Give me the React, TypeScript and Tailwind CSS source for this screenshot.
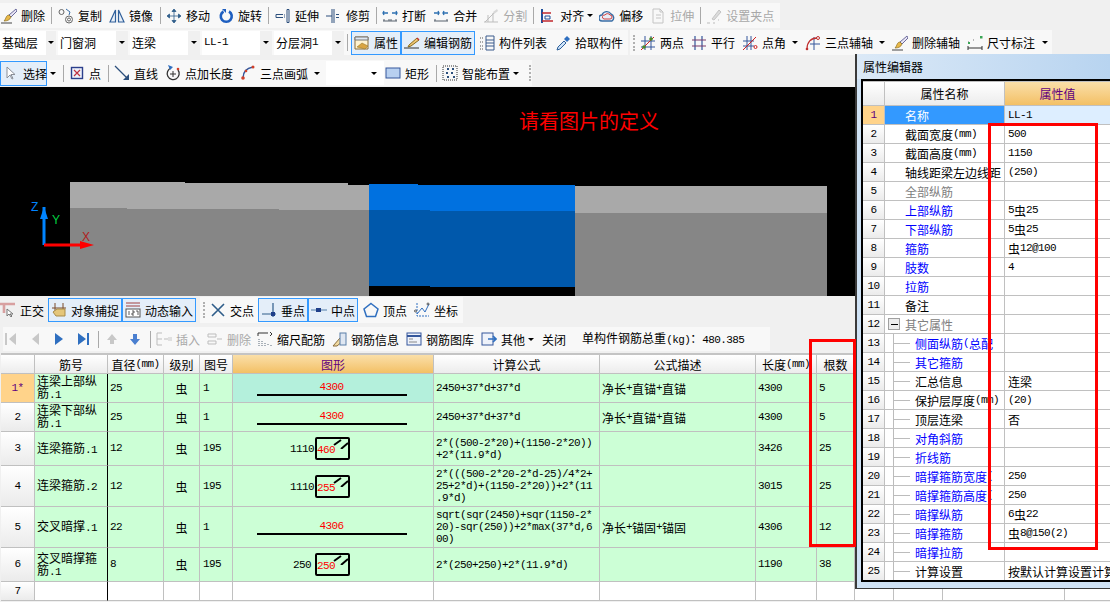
import React from "react";

const Ic = ({ children }: { children: React.ReactNode }) => (
  <svg viewBox="0 0 16 16" className="w-4 h-4 shrink-0" fill="none">
    {children}
  </svg>
);

const icons: Record<string, React.ReactNode> = {
  brush: (
    <>
      <path d="M15 1 8 7l2 2 6-6z" fill="#e8e4f4" stroke="#6b6b9c" />
      <path d="M8 7c-3 0-3 4-5 6 3 0 6-1 7-4z" fill="#e9b949" stroke="#8a6d1f" strokeWidth=".7" />
      <path d="M0 15h11" stroke="#444" />
    </>
  ),
  copy: (
    <>
      <circle cx="3.500" cy="4" r="2.500" stroke="#666" />
      <circle cx="11" cy="11.500" r="3.500" stroke="#666" />
      <circle cx="11" cy="11.500" r="1.500" stroke="#666" />
      <path d="M8 1l4 3-1 3" stroke="#3a6ea5" />
    </>
  ),
  mirror: <path d="M1 14 6.500 2v12zM15 14 9.500 2v12z" stroke="#2f5f9a" strokeWidth="1.200" fill="#eaf0f8" />,
  move: (
    <path
      d="M8 3v10M3 8h10M8 1 6 3.500h4zM8 15l-2-2.500h4zM1 8l2.500-2v4zM15 8l-2.500-2v4z"
      stroke="#2f5d8a"
      fill="#2f5d8a"
      strokeWidth=".8"
    />
  ),
  rotate: (
    <>
      <path d="M5.500 3.500a5.500 5.500 0 1 0 5.500 0" stroke="#1f5fc0" strokeWidth="2.600" />
      <path d="M4 1h4v4z" fill="#1f5fc0" />
    </>
  ),
  extend: <path d="M1 6.500h7M1 9.500h7M1 6.500v3M9 7h1M9 9h1M12 1.500v13h2v-13z" stroke="#2c4f7c" />,
  trim: <path d="M6 1v14M8 1v14M0 8h6M10 6.500h3M10 9.500h3" stroke="#2c4f7c" />,
  breakLine: (
    <>
      <path d="M1 5h5M10 5h5M2 3 1 5l1 2M14 3l1 2-1 2" stroke="#2c6fb0" strokeWidth="1.300" />
      <path d="M1 13h14M2 11v2M7 11v2M9 11v2M14 11v2" stroke="#56606c" />
    </>
  ),
  merge: (
    <>
      <path d="M1 5h5M10 5h5M5 3l1 2-1 2M11 3l-1 2 1 2" stroke="#2c6fb0" strokeWidth="1.300" />
      <path d="M1 13h14M2 11v2M14 11v2" stroke="#56606c" />
    </>
  ),
  split: (
    <>
      <path d="M1 14h14M2 14 13 3M5 14V7M10 14V5" stroke="#bdbdbd" />
      <path d="M10 4l4-3 1 2-4 3z" fill="#d8d8d8" />
    </>
  ),
  align: (
    <>
      <path d="M2 1v14" stroke="#1f4f9a" strokeWidth="2" />
      <path d="M2 5h9M2 13h11" stroke="#c0272d" strokeWidth="1.600" />
      <path d="M5 8h5v3H5z" stroke="#1f4f9a" />
    </>
  ),
  offset: (
    <>
      <path d="M3 13a3 3 0 0 1 0-6 5 5 0 0 1 9-1 4 4 0 0 1 1 7z" stroke="#3a6ea5" strokeWidth="1.400" fill="#e8eef8" />
      <path d="M5 11a2 2 0 0 1 1-4 3 3 0 0 1 5 0 2 2 0 0 1 0 4z" stroke="#d04040" />
    </>
  ),
  stretch: <path d="M3 1h7l3 3v11H3zM10 1v3h3M6 7h5M6 10h5" stroke="#c4c4c4" />,
  grip: (
    <>
      <path d="M1 15h3M7 15h2M12 12h1" stroke="#bbb" />
      <path d="M6 11 13 2l2 2-7 8z" fill="#dcdcdc" stroke="#c4c4c4" />
    </>
  ),
  attr: (
    <>
      <path d="M1 2h13v12H1z" fill="#fff3d0" stroke="#8a6d3b" />
      <path d="M1 2h13v3H1z" fill="#dfe7f2" stroke="#777" />
      <path d="M3 12l5-4 6 3-3 3z" fill="#d9a441" stroke="#8a6d1f" strokeWidth=".5" />
    </>
  ),
  edit: (
    <>
      <path d="M0 13h15" stroke="#333" />
      <path d="M5 10 13 3l2 2-8 6-3 1z" fill="#f0c674" stroke="#8a6d1f" />
      <path d="M13 3l2 2" stroke="#c03030" strokeWidth="1.400" />
    </>
  ),
  list: (
    <>
      <path d="M1 3h3M1 7h3M1 11h3M1 14h3" stroke="#555" strokeDasharray="1 1" />
      <path d="M7 1h8v14H7zM7 5h8M7 8h8M7 11h8" stroke="#3a5a8c" />
    </>
  ),
  pick: (
    <>
      <path d="M2 15l1-3 6-6 2 2-6 6z" fill="#cfe3f8" stroke="#2c5f9a" />
      <path d="M9 4l3-3 3 3-3 3z" fill="#2f6fc0" />
    </>
  ),
  parallel: (
    <>
      <path d="M4 1v14M11 1v14" stroke="#34569b" strokeWidth="1.200" />
      <path d="M1 5h14M1 11h14" stroke="#7a3a6a" strokeWidth="1.200" />
    </>
  ),
  angle: (
    <>
      <path d="M1 6h11M1 11h11M5 1v14M9 1v14" stroke="#34569b" />
      <path d="M1 15 14 2" stroke="#d02020" />
      <circle cx="13.500" cy="12" r="1.500" stroke="#d02020" />
    </>
  ),
  arcAxis: (
    <>
      <path d="M5 9h10M9 2v13" stroke="#34569b" />
      <path d="M2 14C2 7 6 3 12 3" stroke="#c03030" strokeWidth="1.300" />
      <circle cx="2" cy="14" r="1.300" fill="#c03030" />
      <circle cx="13" cy="3" r="1.500" stroke="#c03030" />
    </>
  ),
  dimension: (
    <>
      <path d="M1 11v4M15 11v4M1 13h14" stroke="#333" />
      <path d="M1 7h2M6 5h2" stroke="#777" strokeDasharray="1 1" />
      <rect x="13" y="1" width="2.500" height="2.500" fill="#3aa655" />
      <rect x="1" y="7" width="2" height="2" fill="#3aa655" />
    </>
  ),
  twoPointDots: (
    <>
      <path d="M1 6h14M1 12h14M5 1v14M11 1v14" stroke="#34569b" />
      <path d="M1 15 14 2" stroke="#d02020" />
      <circle cx="11" cy="4" r="1.800" fill="#4a8a2a" />
      <circle cx="4" cy="12" r="1.800" fill="#4a8a2a" />
    </>
  ),
  cursor: <path d="M4 2v11l3-3 2 4 1-.5-2-4h4z" fill="#fff" stroke="#8a8f98" />,
  point: (
    <>
      <rect x="2.500" y="2.500" width="11" height="11" stroke="#2c3f8c" strokeWidth="1.400" fill="#eef2fa" />
      <path d="M5 5l6 6M11 5l-6 6" stroke="#c03040" strokeWidth="1.200" />
    </>
  ),
  line: (
    <>
      <path d="M1 1 14 14" stroke="#2c4f7c" strokeWidth="1.300" />
      <path d="M15 15V9l-6 6z" fill="#2c4f7c" />
    </>
  ),
  pointLen: (
    <>
      <path d="M6 3a6 6 0 1 0 7 2" stroke="#333" strokeWidth="1.300" />
      <path d="M3 0l5 2-3 3z" fill="#2f6fc0" />
      <path d="M8 6v6M5 9h6" stroke="#333" />
      <circle cx="13" cy="4" r="1.300" fill="#d0402a" />
    </>
  ),
  arc: (
    <>
      <path d="M3 13C3 7 7 3 13 2" stroke="#34569b" strokeWidth="1.400" />
      <circle cx="3" cy="13" r="1.800" fill="#d0402a" />
      <circle cx="6" cy="6" r="1.300" fill="#d0402a" />
      <circle cx="13" cy="2" r="1.500" fill="#d0402a" />
    </>
  ),
  rect: <rect x="1" y="3" width="14" height="10" fill="#b8d0f0" stroke="#34569b" />,
  smart: (
    <>
      <rect x="1" y="1" width="14" height="14" stroke="#333" strokeDasharray="1 1" />
      <path d="M5 4h2M10 4h2M4 8h2M9 8h2M5 12h2M11 12h2" stroke="#2c4f7c" strokeWidth="1.800" />
    </>
  ),
  ortho: (
    <>
      <path d="M0 2h15M4 2v9" stroke="#d8a0a0" strokeWidth="2.600" />
      <path d="M7 7v7l2-2 2 3 1-1-2-2h3z" fill="#fff" stroke="#777" />
    </>
  ),
  snap: (
    <>
      <path d="M4 1v8M12 1v8M1 6h14" stroke="#7a4a2a" />
      <path d="M2 10l4-3h8v7H5z" fill="#e4c67a" stroke="#a88b4a" />
    </>
  ),
  dyn: (
    <>
      <path d="M1 1h14M1 4h14" stroke="#a04040" />
      <rect x="1" y="7" width="14" height="8" fill="#fff" stroke="#555" />
      <path d="M4 9v4M7 9h2v2H7v2h2M11 9h2v4" stroke="#333" strokeWidth=".8" />
    </>
  ),
  cross: <path d="M2 2 14 14M14 2 2 14" stroke="#2f5d8a" strokeWidth="1.600" />,
  perp: (
    <>
      <path d="M1 12h14M12 1v14" stroke="#2f5d8a" strokeWidth="1.200" />
      <rect x="10" y="10" width="4" height="4" fill="#1f3f8a" />
    </>
  ),
  mid: (
    <>
      <path d="M0 8h16" stroke="#7a9cc0" strokeWidth="1.400" />
      <rect x="5" y="6" width="5" height="4" fill="#1f3f8a" />
    </>
  ),
  vertex: <path d="M8 1.500 15 7l-2.500 7.500h-9L1 7z" stroke="#2f6fc0" strokeWidth="1.500" />,
  coord: (
    <>
      <path d="M3 1v13h12" stroke="#2f6fc0" strokeDasharray="2 1" />
      <path d="M3 12 8 6l3 4 4-8" stroke="#2f6fc0" />
      <circle cx="1.500" cy="9" r="1" stroke="#555" />
      <circle cx="14" cy="2" r="1" stroke="#555" />
    </>
  ),
  first: <path d="M2 2h2v12H2zM13 2v12L6 8z" fill="#c8c8c8" />,
  prev: <path d="M12 2v12L5 8z" fill="#c8c8c8" />,
  next: <path d="M4 2v12l8-6z" fill="#2f6fc0" />,
  last: <path d="M3 2v12l8-6zM12 2h2v12h-2z" fill="#2f6fc0" />,
  up: <path d="M8 3l5 6h-3v4H6V9H3z" fill="#c8c8c8" />,
  down: <path d="M6 3h4v5h3l-5 6-5-6h3z" fill="#4a7fd0" />,
  insert: (
    <>
      <path d="M1 2h5M1 8h5M1 14h5M1 2v12" stroke="#bdbdbd" />
      <path d="M8 8h4" stroke="#bdbdbd" />
      <rect x="12" y="6" width="4" height="4" fill="#e0e0e0" />
    </>
  ),
  remove: (
    <>
      <path d="M1 3h8v3H1zM1 10h8v3H1z" stroke="#bdbdbd" />
      <path d="M10 8h5" stroke="#bdbdbd" />
    </>
  ),
  scale: (
    <>
      <path d="M1 2h10M1 2v3" stroke="#333" />
      <path d="M13 1l2 2-2 2" stroke="#333" />
      <path d="M2 8v7M5 10v5M8 12v3M11 13v2M14 14v1" stroke="#5a6a7a" strokeDasharray="1 1" />
    </>
  ),
  info: (
    <>
      <path d="M2 15 9 7l3 3-6 5z" fill="#f0d9a0" stroke="#8a6d3b" />
      <rect x="9" y="2" width="6" height="12" fill="#dfe7f2" stroke="#5a7fa8" />
    </>
  ),
  library: (
    <>
      <rect x="1" y="2" width="14" height="12" fill="#eef2fa" stroke="#34569b" />
      <path d="M1 5h14" stroke="#34569b" strokeWidth="2" />
      <path d="M3 8h4M3 11h8" stroke="#888" />
    </>
  ),
  other: (
    <>
      <rect x="1" y="2" width="11" height="12" fill="#eef2fa" stroke="#34569b" />
      <path d="M7 8h8M12 5l3 3-3 3" stroke="#2f6fc0" strokeWidth="1.600" />
    </>
  ),
};

const mono = "font-['Liberation_Mono',monospace] text-[11px] tracking-[-0.6px]";

const T = ({ s }: { s: string }) => (
  <>
    {s.split(/([\x20-\x7e]+)/).map((part, i) =>
      /[\x20-\x7e]/.test(part) ? (
        <span key={i} className={mono}>
          {part}
        </span>
      ) : (
        part
      )
    )}
  </>
);

const Tool = ({
  icon,
  label,
  cn = "",
  muted = false,
  active = false,
}: {
  icon: string;
  label: string;
  cn?: string;
  muted?: boolean;
  active?: boolean;
}) => (
  <div
    className={`flex items-center gap-[4px] shrink-0 whitespace-nowrap ${cn} ${
      muted ? "text-[#a8a8a8]" : ""
    } ${active ? "h-[24px] px-[2px] border border-[#3399ff] bg-[#e4eef9]" : ""}`}
  >
    <Ic>{icons[icon]}</Ic>
    <span>{label}</span>
  </div>
);

const Sep = ({ cn = "" }: { cn?: string }) => (
  <div className={`w-px h-[17px] bg-[#a9a9a9] shrink-0 ${cn}`} />
);

const Arrow = ({ cn = "" }: { cn?: string }) => (
  <div className={`w-0 h-0 border-x-[3px] border-x-transparent border-t-[3px] border-t-black shrink-0 ${cn}`} />
);

const Grip = ({ cn = "" }: { cn?: string }) => (
  <div className={`w-[2px] h-[16px] shrink-0 border-l-2 border-dotted border-[#b0b0b0] ${cn}`} />
);

const Combo = ({ label, cn = "" }: { label: string; cn?: string }) => (
  <div className={`flex h-[24px] shrink-0 bg-white ${cn}`}>
    <div className="w-[58px] pl-[2px] flex items-center whitespace-nowrap">
      <T s={label} />
    </div>
    <div className="w-[12px] bg-[#f0f0f0] flex items-center justify-center">
      <Arrow />
    </div>
  </div>
);

const Gang = () => <span>虫</span>;

const Bar = ({ value }: { value: string }) => (
  <div className="h-full flex flex-col items-center justify-center pr-[3px]">
    <span className={`text-[#ff0000] leading-[12px] ${mono}`}>{value}</span>
    <div className="w-[150px] h-[2px] bg-black mt-[1px]" />
  </div>
);

const Stirrup = ({ side, red }: { side: string; red: string }) => (
  <div className="flex items-center h-full pl-[56px]">
    <span className={`w-[26px] mt-[2px] text-center ${mono}`}>{side}</span>
    <div className="relative w-[35px] h-[23px] border-2 border-black rounded-[2px] flex items-end">
      <span className={`text-[#ff0000] leading-[15px] ${mono}`}>{red}</span>
      <svg viewBox="0 0 15 10" className="absolute right-0 top-0 w-[15px] h-[10px]" fill="none">
        <path d="M1 6 8 1M8 10 15 4" stroke="#000" strokeWidth="2" />
      </svg>
    </div>
  </div>
);

const cols = "grid grid-cols-[34px_73px_56px_36px_33px_201px_166px_156px_61px_38px_39px_49px_122px_60px]";

const rows = [
  { h: "h-[29px]", n: "1*", name: "连梁上部纵筋.1", d: "25", no: "1", shape: <Bar value="4300" />, f: "2450+37*d+37*d", desc: "净长+直锚+直锚", len: "4300", cnt: "5" },
  { h: "h-[29px]", n: "2", name: "连梁下部纵筋.1", d: "25", no: "1", shape: <Bar value="4300" />, f: "2450+37*d+37*d", desc: "净长+直锚+直锚", len: "4300", cnt: "5" },
  { h: "h-[34px]", n: "3", name: "连梁箍筋.1", d: "12", no: "195", shape: <Stirrup side="1110" red="460" />, f: "2*((500-2*20)+(1150-2*20))\n+2*(11.9*d)", desc: "", len: "3426", cnt: "25" },
  { h: "h-[41px]", n: "4", name: "连梁箍筋.2", d: "12", no: "195", shape: <Stirrup side="1110" red="255" />, f: "2*(((500-2*20-2*d-25)/4*2+\n25+2*d)+(1150-2*20))+2*(11\n.9*d)", desc: "", len: "3015", cnt: "25" },
  { h: "h-[41px]", n: "5", name: "交叉暗撑.1", d: "22", no: "1", shape: <Bar value="4306" />, f: "sqrt(sqr(2450)+sqr(1150-2*\n20)-sqr(250))+2*max(37*d,6\n00)", desc: "净长+锚固+锚固", len: "4306", cnt: "12" },
  { h: "h-[34px]", n: "6", name: "交叉暗撑箍筋.1", d: "8", no: "195", shape: <Stirrup side="250" red="250" />, f: "2*(250+250)+2*(11.9*d)", desc: "", len: "1190", cnt: "38" },
];

const cell = "border-r border-b border-[#c0c0c0] flex items-center overflow-hidden";
const head =
  "border-r border-b border-[#c0c0c0] flex items-center justify-center bg-gradient-to-b from-white to-[#ececec] h-[19px]";
const num = "border-r border-b border-[#c0c0c0] flex items-center justify-center";
const numBg = "bg-gradient-to-b from-white to-[#ebebeb]";

type Prop = { n: number; name: string; value?: string; tone?: "blue" | "gray"; sub?: boolean };

const props: Prop[] = [
  { n: 1, name: "名称", value: "LL-1" },
  { n: 2, name: "截面宽度(mm)", value: "500" },
  { n: 3, name: "截面高度(mm)", value: "1150" },
  { n: 4, name: "轴线距梁左边线距", value: "(250)" },
  { n: 5, name: "全部纵筋", tone: "gray" },
  { n: 6, name: "上部纵筋", value: "5虫25", tone: "blue" },
  { n: 7, name: "下部纵筋", value: "5虫25", tone: "blue" },
  { n: 8, name: "箍筋", value: "虫12@100", tone: "blue" },
  { n: 9, name: "肢数", value: "4", tone: "blue" },
  { n: 10, name: "拉筋", tone: "blue" },
  { n: 11, name: "备注" },
  { n: 12, name: "其它属性", tone: "gray" },
  { n: 13, name: "侧面纵筋(总配", tone: "blue", sub: true },
  { n: 14, name: "其它箍筋", tone: "blue", sub: true },
  { n: 15, name: "汇总信息", value: "连梁", sub: true },
  { n: 16, name: "保护层厚度(mm)", value: "(20)", sub: true },
  { n: 17, name: "顶层连梁", value: "否", sub: true },
  { n: 18, name: "对角斜筋", tone: "blue", sub: true },
  { n: 19, name: "折线筋", tone: "blue", sub: true },
  { n: 20, name: "暗撑箍筋宽度(", value: "250", tone: "blue", sub: true },
  { n: 21, name: "暗撑箍筋高度(", value: "250", tone: "blue", sub: true },
  { n: 22, name: "暗撑纵筋", value: "6虫22", tone: "blue", sub: true },
  { n: 23, name: "暗撑箍筋", value: "虫8@150(2)", tone: "blue", sub: true },
  { n: 24, name: "暗撑拉筋", tone: "blue", sub: true },
  { n: 25, name: "计算设置", value: "按默认计算设置计算", sub: true },
];

const PropertyWindow = () => (
  <div className="absolute left-[855px] top-[54px] w-[255px] h-[535px] bg-[#cfe2f5] border-l-2 border-b border-[#3a3a3a] overflow-hidden">
    <div className="h-[25px] pl-[6px] flex items-center bg-gradient-to-r from-[#dbe9f7] to-[#b8d4f0]">属性编辑器</div>
    <div className="ml-[4px] h-[503px] border-2 border-double border-black border-r-0 bg-white overflow-hidden">
      <div className="flex h-[25px] border-y border-[#c0c0c0]">
        <div className="w-[22px] border-r border-[#c0c0c0] bg-gradient-to-b from-white to-[#ebebeb]" />
        <div className="w-[120px] border-r border-[#c0c0c0] flex items-center justify-center bg-gradient-to-b from-white to-[#ececec]">
          属性名称
        </div>
        <div className="flex-1 flex items-center justify-center text-[#60007f] bg-gradient-to-b from-[#fadfa8] to-[#f3c064]">
          属性值
        </div>
      </div>
      {props.map((p) => (
        <div key={p.n} className="flex h-[19px] border-b border-[#c0c0c0]">
          <div
            className={`w-[22px] border-r border-[#c0c0c0] flex items-center justify-center ${mono} ${
              p.n === 1 ? "bg-[#ffd38a] text-[#60007f]" : numBg
            }`}
          >
            {p.n}
          </div>
          <div
            className={`relative w-[120px] border-r border-[#c0c0c0] flex items-center whitespace-nowrap overflow-hidden ${
              p.sub ? "pl-[30px]" : "pl-[20px]"
            } ${p.n === 1 ? "bg-[#3399ff] text-white" : ""} ${
              p.tone === "blue" ? "text-[#0000ff]" : ""
            } ${p.tone === "gray" ? "text-[#808080]" : ""}`}
          >
            {p.sub && (
              <>
                <div className="absolute left-[8px] top-0 h-full w-px bg-[#bcbcbc]" />
                <div className="absolute left-[9px] top-[9px] h-px w-[16px] bg-[#bcbcbc]" />
              </>
            )}
            {p.n === 12 && (
              <div className="absolute left-[3px] top-[3px] w-[12px] h-[12px] border border-[#a0a0a0] bg-[#ececec] flex items-center justify-center">
                <div className="w-[7px] h-px bg-black" />
              </div>
            )}
            <T s={p.name} />
          </div>
          <div
            className={`flex-1 pl-[3px] flex items-center whitespace-pre overflow-hidden ${
              p.n === 1 ? "bg-[#ddeeff]" : ""
            }`}
          >
            {p.value ? <T s={p.value} /> : null}
          </div>
        </div>
      ))}
    </div>
  </div>
);

export default function App() {
  return (
    <div className="relative w-[1110px] h-[602px] overflow-hidden bg-[#f0f0f0] text-black text-[12px] leading-[13px] font-['Noto_Sans_CJK_SC',sans-serif]">
      <div className="h-[30px] pt-[3px]">
        <div className="flex items-center w-[780px] h-[25px] bg-[#f8f8f8]">
          <Tool icon="brush" label="删除" cn="ml-[1px]" />
          <Sep cn="ml-[6px]" />
          <Tool icon="copy" label="复制" cn="ml-[6px]" />
          <Tool icon="mirror" label="镜像" cn="ml-[7px]" />
          <Sep cn="ml-[7px]" />
          <Tool icon="move" label="移动" cn="ml-[5px]" />
          <Tool icon="rotate" label="旋转" cn="ml-[8px]" />
          <Sep cn="ml-[6px]" />
          <Tool icon="extend" label="延伸" cn="ml-[6px]" />
          <Tool icon="trim" label="修剪" cn="ml-[7px]" />
          <Sep cn="ml-[6px]" />
          <Tool icon="breakLine" label="打断" cn="ml-[5px]" />
          <Tool icon="merge" label="合并" cn="ml-[7px]" />
          <Tool icon="split" label="分割" cn="ml-[6px]" muted />
          <Sep cn="ml-[6px]" />
          <Tool icon="align" label="对齐" cn="ml-[6px]" />
          <Arrow cn="ml-[3px]" />
          <Tool icon="offset" label="偏移" cn="ml-[6px]" />
          <Tool icon="stretch" label="拉伸" cn="ml-[7px]" muted />
          <Sep cn="ml-[6px]" />
          <Tool icon="grip" label="设置夹点" cn="ml-[5px]" muted />
        </div>
      </div>

      <div className="h-[27px] flex">
        <div className="flex items-center w-[628px] h-[25px] bg-[#f8f8f8]">
          <Combo label="基础层" cn="w-[56px] overflow-hidden" />
          <Combo label="门窗洞" cn="ml-[2px]" />
          <Combo label="连梁" cn="ml-[2px]" />
          <Combo label="LL-1" cn="ml-[2px]" />
          <Combo label="分层洞1" cn="ml-[2px]" />
          <Sep cn="ml-[3px]" />
          <Tool icon="attr" label="属性" cn="ml-[3px]" active />
          <Tool icon="edit" label="编辑钢筋" active />
          <Tool icon="list" label="构件列表" cn="ml-[4px]" />
          <Tool icon="pick" label="拾取构件" cn="ml-[8px]" />
        </div>
        <div className="flex items-center ml-[2px] w-[422px] h-[25px] bg-[#f8f8f8]">
          <Grip cn="ml-[3px]" />
          <Tool icon="twoPointDots" label="两点" cn="ml-[5px]" />
          <Tool icon="parallel" label="平行" cn="ml-[7px]" />
          <Tool icon="angle" label="点角" cn="ml-[7px]" />
          <Arrow cn="ml-[6px]" />
          <Tool icon="arcAxis" label="三点辅轴" cn="ml-[7px]" />
          <Arrow cn="ml-[6px]" />
          <Tool icon="brush" label="删除辅轴" cn="ml-[7px]" />
          <Tool icon="dimension" label="尺寸标注" cn="ml-[7px]" />
          <Arrow cn="ml-[7px]" />
        </div>
      </div>

      <div className="h-[30px] pt-[3px]">
        <div className="flex items-center w-[532px] h-[26px] bg-[#f8f8f8]">
          <Tool icon="cursor" label="选择" cn="w-[47px] !h-[25px]" active />
          <Arrow cn="ml-[3px]" />
          <Sep cn="ml-[7px]" />
          <Tool icon="point" label="点" cn="ml-[5px]" />
          <Sep cn="ml-[7px]" />
          <Tool icon="line" label="直线" cn="ml-[5px]" />
          <Tool icon="pointLen" label="点加长度" cn="ml-[7px]" />
          <Tool icon="arc" label="三点画弧" cn="ml-[7px]" />
          <Arrow cn="ml-[6px]" />
          <div className="ml-[6px] w-[58px] h-[24px] bg-white flex items-center justify-end pr-[7px]">
            <Arrow />
          </div>
          <Tool icon="rect" label="矩形" cn="ml-[1px]" />
          <Sep cn="ml-[7px]" />
          <Tool icon="smart" label="智能布置" cn="ml-[5px]" />
          <Arrow cn="ml-[3px]" />
          <Grip cn="ml-[10px]" />
        </div>
      </div>

      <div className="relative h-[209px] bg-black">
        <svg viewBox="0 0 1110 209" className="w-full h-full block">
          <path d="M70 95h115v1h163v2h21v26H70z" fill="#a9a9a9" />
          <path d="M70 121h57v1h152v1h90v86H70z" fill="#868686" />
          <path d="M369 97h49v1h157v26H369z" fill="#0071e0" />
          <path d="M369 123h61v1h145v76h-145v-1H369z" fill="#0058ab" />
          <path d="M575 99h252v28H575z" fill="#a9a9a9" />
          <path d="M575 126h252v83H575z" fill="#868686" />
          <path d="M44 158v-38" stroke="#0084ff" strokeWidth="3" />
          <path d="M44 120l-4 12h8z" fill="#0084ff" />
          <path d="M44 158h38" stroke="#ff0000" strokeWidth="3" />
          <path d="M94 158l-14-4v8z" fill="#ff0000" />
          <text x="31" y="124" fontSize="12" fill="#0084ff" fontFamily="Liberation Sans, sans-serif">Z</text>
          <text x="52" y="137" fontSize="12" fill="#00d040" fontFamily="Liberation Sans, sans-serif">Y</text>
          <text x="82" y="154" fontSize="12" fill="#b02020" fontFamily="Liberation Sans, sans-serif">X</text>
        </svg>
        <div className="absolute left-[519px] top-[22px] text-[20px] leading-[24px] text-[#ff0000]">请看图片的定义</div>
      </div>

      <div className="h-[30px] pt-[2px]">
        <div className="h-[24px] flex items-center">
          <Tool icon="ortho" label="正交" />
          <Tool icon="snap" label="对象捕捉" cn="ml-[4px]" active />
          <Tool icon="dyn" label="动态输入" active />
          <div className="flex items-center ml-[4px] h-[26px] w-[263px] bg-[#f8f8f8]">
            <Grip cn="ml-[3px]" />
            <Tool icon="cross" label="交点" cn="ml-[5px]" />
            <Tool icon="perp" label="垂点" cn="ml-[4px]" active />
            <Tool icon="mid" label="中点" active />
            <Tool icon="vertex" label="顶点" cn="ml-[5px]" />
            <Tool icon="coord" label="坐标" cn="ml-[7px]" />
          </div>
        </div>
      </div>

      <div className="h-[27px] pt-[1px]">
        <div className="flex items-center ml-[3px] w-[767px] h-[24px] bg-[#f8f8f8]">
          <Ic>{icons.first}</Ic>
          <div className="ml-[8px]"><Ic>{icons.prev}</Ic></div>
          <div className="ml-[8px]"><Ic>{icons.next}</Ic></div>
          <div className="ml-[8px]"><Ic>{icons.last}</Ic></div>
          <Sep cn="ml-[7px]" />
          <div className="ml-[5px]"><Ic>{icons.up}</Ic></div>
          <div className="ml-[7px]"><Ic>{icons.down}</Ic></div>
          <Sep cn="ml-[7px]" />
          <Tool icon="insert" label="插入" cn="ml-[5px]" muted />
          <Tool icon="remove" label="删除" cn="ml-[7px]" muted />
          <Tool icon="scale" label="缩尺配筋" cn="ml-[6px]" />
          <Tool icon="info" label="钢筋信息" cn="ml-[6px]" />
          <Tool icon="library" label="钢筋图库" cn="ml-[7px]" />
          <Tool icon="other" label="其他" cn="ml-[7px]" />
          <Arrow cn="ml-[3px]" />
          <span className="ml-[8px]">关闭</span>
          <span className="ml-[16px] whitespace-nowrap">
            <T s="单构件钢筋总重(kg)：480.385" />
          </span>
        </div>
      </div>

      <div className={`ml-[1px] border-t-2 border-[#c4c4c4] bg-white ${cols}`}>
        <div className={head} />
        <div className={head}>筋号</div>
        <div className={head}><T s="直径(mm)" /></div>
        <div className={head}>级别</div>
        <div className={head}>图号</div>
        <div className="border-r border-b border-[#c0c0c0] flex items-center justify-center bg-gradient-to-b from-[#fadfa8] to-[#f3c064] text-[#60007f] h-[19px]">
          图形
        </div>
        <div className={head}>计算公式</div>
        <div className={head}>公式描述</div>
        <div className={head}><T s="长度(mm)" /></div>
        <div className={head}>根数</div>
        <div className={head} />
        <div className={head} />
        <div className={head} />
        <div className={head} />

        {rows.map((r, i) => (
          <React.Fragment key={r.n}>
            <div className={`${num} ${r.h} ${mono} ${i === 0 ? "bg-[#ffd38a] text-[#60007f]" : numBg}`}>
              {r.n}
            </div>
            <div className={`${cell} ${r.h} bg-[#ccffd6] pl-[2px] !border-r-black leading-[12px]`}>
              <span><T s={r.name} /></span>
            </div>
            <div className={`${cell} ${r.h} bg-[#ccffd6] pl-[2px]`}><T s={r.d} /></div>
            <div className={`${cell} ${r.h} bg-[#ccffd6] justify-center`}><Gang /></div>
            <div className={`${cell} ${r.h} bg-[#ccffd6] pl-[3px]`}><T s={r.no} /></div>
            <div className={`border-r border-b border-[#c0c0c0] overflow-hidden ${r.h} ${i === 0 ? "bg-[#b4f0dc]" : "bg-[#ccffd6]"}`}>
              {r.shape}
            </div>
            <div className={`${cell} ${r.h} bg-[#ccffd6] pl-[2px] whitespace-pre-line leading-[12px]`}>
              <span className={mono}>{r.f}</span>
            </div>
            <div className={`${cell} ${r.h} bg-[#ccffd6] pl-[2px]`}><T s={r.desc} /></div>
            <div className={`${cell} ${r.h} bg-[#ccffd6] pl-[2px]`}><T s={r.len} /></div>
            <div className={`${cell} ${r.h} bg-[#ccffd6] pl-[2px]`}><T s={r.cnt} /></div>
            <div className={`${cell} ${r.h}`} />
            <div className={`${cell} ${r.h}`} />
            <div className={`${cell} ${r.h}`} />
            <div className={`${cell} ${r.h}`} />
          </React.Fragment>
        ))}

        <div className={`${num} ${numBg} h-[19px] ${mono}`}>7</div>
        <div className={`${cell} h-[19px] !border-r-black`} />
        {Array.from({ length: 12 }, (_, i) => (
          <div key={i} className={`${cell} h-[19px]`} />
        ))}
      </div>

      <PropertyWindow />

      <div className="absolute left-[809px] top-[339px] w-[47px] h-[208px] border-[3px] border-[#ff0000]" />
      <div className="absolute left-[988px] top-[123px] w-[110px] h-[427px] border-[3px] border-[#ff0000]" />
    </div>
  );
}
